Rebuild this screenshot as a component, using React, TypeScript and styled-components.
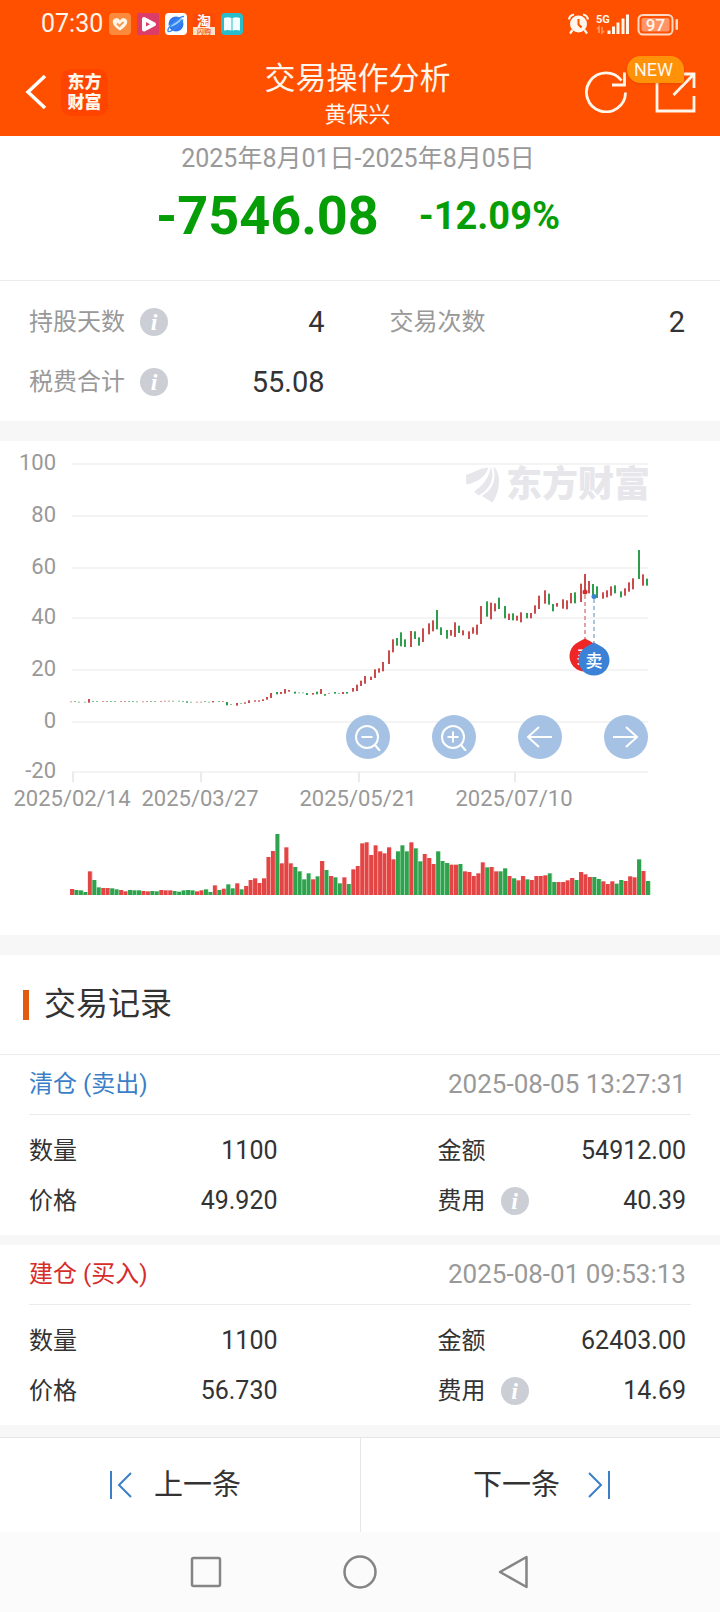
import React from "react";
import styled, { createGlobalStyle } from "styled-components";

const RED = "#c94b4b";
const GREEN = "#2f9e4c";
const BLUE = "#3b82d6";

const GlobalStyle = createGlobalStyle`
  *, *::before, *::after { box-sizing: border-box; }
  body {
    margin: 0;
    background: #fff;
    color: #333;
    font-family: Roboto, "Noto Sans CJK SC", sans-serif;
    line-height: 1.2;
  }
  button {
    font: inherit;
    color: inherit;
    border: 0;
    padding: 0;
    background: none;
    cursor: pointer;
  }
  h1, h2, h3, p, dl, dt, dd { margin: 0; font-weight: 400; }
  svg { display: block; }
`;

/* ---------- status bar and header ---------- */

const Header = styled.header`
  background: #ff5000;
  color: #fff6ec;
`;

const StatusBar = styled.div`
  display: flex;
  align-items: center;
  justify-content: space-between;
  height: 48px;
  padding: 0 41px;
`;

const StatusGroup = styled.div<{ $gap: number }>`
  display: flex;
  align-items: center;
  gap: ${(p) => p.$gap}px;
`;

const Clock = styled.time`
  font-size: 25px;
  line-height: 28px;
`;

const TitleBar = styled.div`
  display: grid;
  grid-template-columns: 1fr auto 1fr;
  align-items: center;
  height: 88px;
  padding: 0 23px 0 24px;
`;

const TitleLeft = styled.div`
  display: flex;
  align-items: center;
  gap: 13px;
`;

const Brand = styled.span`
  display: grid;
  place-content: center;
  width: 47px;
  height: 47px;
  border-radius: 10px;
  background: #ff4400;
  font-size: 17px;
  line-height: 20px;
  font-weight: 900;
`;

const TitleText = styled.div`
  text-align: center;
  padding: 6px 6px 0 0;
`;

const Title = styled.h1`
  font-size: 31px;
  line-height: 40px;
`;

const Holder = styled.p`
  font-size: 22px;
  line-height: 32px;
`;

const Actions = styled.div`
  display: flex;
  justify-content: flex-end;
  gap: 28px;
`;

const ActionButton = styled.button`
  position: relative;
  width: 42px;
  height: 42px;
`;

const NewBadge = styled.span`
  position: absolute;
  left: -28px;
  top: -15px;
  width: 57px;
  height: 27px;
  padding-right: 4px;
  border-radius: 14px 14px 3px 14px;
  background: #ff9208;
  box-shadow: 0 1px 3px rgba(190, 60, 0, 0.4);
  font-size: 18px;
  line-height: 28px;
  text-align: center;
`;

/* ---------- summary ---------- */

const Band = styled.div<{ $height: number }>`
  height: ${(p) => p.$height}px;
  background: #f7f7f7;
`;

const Summary = styled.section`
  display: flex;
  flex-direction: column;
  align-items: center;
  height: 145px;
  padding-right: 4px;
  border-bottom: 1px solid #ebebeb;
`;

const Period = styled.p`
  padding-top: 6px;
  font-size: 25px;
  line-height: 34px;
  color: #999;
`;

const Result = styled.div`
  display: flex;
  align-items: center;
  gap: 40px;
  color: #069e06;
  font-weight: 700;
  line-height: 80px;
`;

const Profit = styled.span`
  font-size: 54px;
`;

const Rate = styled.span`
  font-size: 38px;
`;

const Stats = styled.dl`
  display: grid;
  grid-template-columns: 1fr 1fr;
  column-gap: 65px;
  padding: 11px 35px 9px 29px;
`;

const Stat = styled.div`
  display: flex;
  align-items: center;
  height: 60px;

  dt {
    display: flex;
    align-items: center;
    gap: 15px;
    font-size: 24px;
    color: #999;
  }
  dd {
    flex: 1;
    font-size: 29px;
    text-align: right;
  }
`;

const InfoButton = styled.button`
  width: 28px;
  height: 28px;
  border-radius: 50%;
  background: #cbced5;
  color: #fff;
  font: italic 700 24px/28px "Liberation Serif", serif;
  text-align: center;
`;

/* ---------- chart ---------- */

const ChartPanel = styled.section`
  position: relative;

  & > svg {
    width: 100%;
    height: auto;
  }
`;

const ChartTools = styled.div`
  position: absolute;
  right: 10%;
  top: 55.5%;
  display: flex;
  gap: 42px;
`;

const ToolButton = styled.button`
  display: grid;
  place-items: center;
  width: 44px;
  height: 44px;
  border-radius: 50%;
  background: #a5c2e4;
`;

/* ---------- records ---------- */

const SectionTitle = styled.h2`
  display: flex;
  align-items: center;
  gap: 15px;
  height: 100px;
  padding-left: 23px;
  border-bottom: 1px solid #ebebeb;
  font-size: 32px;

  &::before {
    content: "";
    width: 6px;
    height: 30px;
    background: #e05a10;
  }
`;

const Card = styled.article`
  padding: 0 29px;
`;

const CardHead = styled.div`
  display: flex;
  align-items: center;
  justify-content: space-between;
  height: 60px;
  padding-right: 5px;
  border-bottom: 1px solid #ebebeb;
`;

const Action = styled.h3<{ $color: string }>`
  font-size: 24px;
  color: ${(p) => p.$color};
`;

const Stamp = styled.time`
  font-size: 26px;
  color: #999;
`;

const Fields = styled.dl`
  display: grid;
  grid-template-columns: 1fr 1fr;
  column-gap: 160px;
  padding: 11px 5px 9px 0;
`;

const Field = styled.div`
  display: flex;
  align-items: center;
  height: 50px;

  dt {
    display: flex;
    align-items: center;
    gap: 15px;
    font-size: 24px;
  }
  dd {
    flex: 1;
    font-size: 25px;
    text-align: right;
  }
`;

const Pager = styled.nav`
  display: grid;
  grid-template-columns: 1fr 1fr;
  border-top: 1px solid #e6e6e6;
`;

const PagerButton = styled.button`
  display: flex;
  align-items: center;
  justify-content: center;
  gap: 22px;
  height: 94px;
  padding-right: 9px;
  font-size: 29px;

  & + & {
    padding: 0 0 0 2px;
    gap: 28px;
    border-left: 1px solid #e6e6e6;
  }
`;

const SystemBar = styled.footer`
  display: flex;
  justify-content: center;
  align-items: center;
  gap: 118px;
  height: 80px;
  background: #fbfbfb;

  button { width: 36px; height: 36px; }
`;

/* ---------- data ---------- */

type Tone = "R" | "G";

/* [tone, candle top, candle bottom, volume], one entry per trading day */
const days: [Tone, number, number, number][] = [
  ["R", 784, 787, 18], ["G", 783, 786, 15], ["G", 785, 788, 14], ["G", 785, 788, 9], ["R", 777, 788, 71],
  ["G", 783, 786, 45], ["G", 783, 786, 23], ["R", 783, 786, 21], ["R", 783, 786, 21], ["G", 783, 786, 20],
  ["G", 783, 786, 17], ["R", 783, 786, 15], ["R", 783, 786, 11], ["G", 783, 786, 15], ["G", 783, 786, 14],
  ["G", 784, 787, 14], ["R", 784, 787, 12], ["R", 783, 786, 11], ["G", 783, 786, 12], ["G", 783, 786, 11],
  ["R", 783, 786, 15], ["R", 782, 785, 14], ["R", 782, 785, 14], ["G", 782, 785, 12], ["G", 782, 785, 10],
  ["G", 783, 786, 14], ["G", 784, 788, 15], ["G", 785, 788, 14], ["R", 785, 788, 11], ["R", 785, 788, 14],
  ["G", 783, 786, 17], ["G", 785, 788, 9], ["R", 783, 787, 29], ["G", 783, 786, 15], ["R", 783, 786, 19],
  ["G", 786, 796, 32], ["G", 792, 795, 20], ["R", 789, 797, 35], ["G", 789, 792, 17], ["R", 787, 791, 27],
  ["R", 781, 789, 45], ["R", 781, 785, 50], ["R", 781, 785, 36], ["R", 778, 783, 50], ["R", 771, 779, 114],
  ["R", 759, 774, 132], ["G", 756, 763, 183], ["R", 756, 762, 95], ["R", 747, 761, 143], ["R", 750, 755, 95],
  ["G", 755, 761, 84], ["G", 757, 760, 71], ["G", 757, 760, 47], ["G", 759, 765, 65], ["R", 759, 764, 47],
  ["G", 755, 763, 56], ["R", 747, 762, 102], ["G", 762, 767, 75], ["R", 759, 762, 57], ["G", 756, 761, 53],
  ["G", 759, 762, 35], ["R", 756, 762, 53], ["G", 756, 761, 33], ["R", 744, 755, 77], ["R", 734, 753, 87],
  ["R", 722, 738, 155], ["R", 708, 731, 158], ["R", 710, 720, 120], ["R", 688, 714, 149], ["R", 685, 698, 131],
  ["R", 666, 694, 125], ["R", 631, 672, 143], ["R", 598, 637, 107], ["G", 594, 617, 131], ["G", 577, 619, 149],
  ["G", 598, 621, 131], ["R", 573, 621, 158], ["G", 574, 597, 140], ["G", 592, 617, 101], ["R", 565, 606, 123],
  ["R", 550, 583, 111], ["R", 541, 574, 93], ["G", 510, 568, 131], ["G", 562, 585, 102], ["G", 570, 596, 96],
  ["R", 570, 587, 91], ["R", 547, 591, 91], ["G", 557, 579, 93], ["R", 571, 586, 71], ["R", 574, 597, 69],
  ["R", 562, 581, 57], ["R", 554, 584, 65], ["R", 498, 552, 98], ["G", 484, 530, 83], ["R", 488, 538, 84],
  ["R", 490, 514, 71], ["G", 473, 507, 71], ["G", 498, 535, 80], ["R", 521, 540, 57], ["G", 520, 541, 50],
  ["R", 527, 542, 44], ["R", 517, 547, 57], ["G", 519, 535, 47], ["R", 519, 535, 45], ["R", 496, 521, 57],
  ["R", 467, 507, 57], ["R", 451, 491, 59], ["G", 461, 494, 65], ["G", 492, 514, 39], ["R", 489, 500, 39],
  ["R", 478, 506, 39], ["R", 481, 508, 44], ["R", 459, 490, 51], ["G", 457, 490, 45], ["R", 431, 486, 69],
  ["R", 402, 458, 62], ["R", 423, 460, 54], ["G", 432, 468, 54], ["G", 439, 474, 48], ["R", 457, 476, 41],
  ["R", 451, 472, 33], ["R", 439, 467, 41], ["G", 436, 460, 34], ["G", 454, 472, 45], ["R", 445, 467, 42],
  ["R", 427, 455, 56], ["R", 415, 448, 53], ["G", 330, 417, 107], ["R", 403, 437, 72], ["G", 416, 437, 42],
];

const yAxis = [
  { label: "100", y: 23 },
  { label: "80", y: 75 },
  { label: "60", y: 127 },
  { label: "40", y: 177 },
  { label: "20", y: 229 },
  { label: "0", y: 281 },
  { label: "-20", y: 331 },
];

const xAxis = [
  { label: "2025/02/14", x: 73 },
  { label: "2025/03/27", x: 201 },
  { label: "2025/05/21", x: 359 },
  { label: "2025/07/10", x: 515 },
];

const PITCH = 4.465;

const records = [
  {
    action: "清仓 (卖出)", color: "#3a7fc8", time: "2025-08-05 13:27:31",
    fields: [["数量", "1100"], ["金额", "54912.00"], ["价格", "49.920"], ["费用", "40.39"]],
  },
  {
    action: "建仓 (买入)", color: "#d62c2c", time: "2025-08-01 09:53:13",
    fields: [["数量", "1100"], ["金额", "62403.00"], ["价格", "56.730"], ["费用", "14.69"]],
  },
];

/* ---------- parts ---------- */

const Info = ({ topic }: { topic: string }) => (
  <InfoButton type="button" aria-label={`${topic}说明`}>i</InfoButton>
);

const AppIcons = () => (
  <>
    <svg width="22" height="22" viewBox="0 0 22 22">
      <rect width="22" height="22" rx="4" fill="#fb8a3c" />
      <path d="M11 17.500C7 15 3.800 12 3.800 8.800a3.700 3.700 0 0 1 7.200-1.200 3.700 3.700 0 0 1 7.200 1.200C18.200 12 15 15 11 17.500z" fill="#fff6e8" />
      <path d="m8 10.500 2.500 2.500 4-4" fill="none" stroke="#f49a55" strokeWidth="1.800" />
    </svg>
    <svg width="22" height="22" viewBox="0 0 22 22">
      <rect width="22" height="22" rx="2" fill="#dc3c68" />
      <path d="M7 6v10.500l10-5.200z" fill="#fff" stroke="#fff" strokeWidth="4" strokeLinejoin="round" />
      <path d="M9 9v4.500l4-2.300z" fill="#dc3c68" />
    </svg>
    <svg width="22" height="22" viewBox="0 0 22 22">
      <rect width="22" height="22" rx="4" fill="#fff" />
      <circle cx="11" cy="11" r="7.500" fill="#2f78ee" />
      <path d="M4 13C8 13 14 9 16.500 5.500" fill="none" stroke="#8fd0ff" strokeWidth="2" />
      <path d="M3 18.500C1.500 15 14 3 19 3.500M3 18.500c3 1 13-7 15-12" fill="none" stroke="#3c86ee" strokeWidth="1.300" />
    </svg>
    <svg width="22" height="22" viewBox="0 0 22 22">
      <rect width="22" height="22" rx="2" fill="#fb4a08" />
      <rect y="14" width="22" height="8" fill="#fbe3c8" />
      <text x="11" y="13" textAnchor="middle" fontSize="14" fontWeight="700" fill="#fff">淘</text>
      <text x="11" y="21" textAnchor="middle" fontSize="7" fontWeight="700" fill="#f0641e">闪购</text>
    </svg>
    <svg width="22" height="22" viewBox="0 0 22 22">
      <rect width="22" height="22" rx="4" fill="#29bccb" />
      <path d="M3 5q4-1.500 7.500 0v12.500Q7 16.500 3 17.500zM19 5q-4-1.500-7.500 0v12.500q3.500-1 7.500 0z" fill="#f2fdff" />
    </svg>
  </>
);

const DeviceState = () => (
  <svg width="111" height="24" viewBox="0 0 111 24">
    <circle cx="10.500" cy="12" r="8.500" fill="#fff6ec" />
    <path d="M1 7.500A6 6 0 0 1 6 2.500M20 7.500a6 6 0 0 0-5-5M4.500 18 2 21.500M16.500 18l2.500 3.500" stroke="#fff6ec" strokeWidth="2.200" fill="none" />
    <path d="M10.500 7v5.500l3 3" stroke="#ff5000" strokeWidth="2" fill="none" />
    <text x="28" y="10.500" fontSize="11" fontWeight="700" fill="#fff6ec">5G</text>
    <path d="M31 21v-6l-2 2M34 15v6l2-2" stroke="#ff9a6b" strokeWidth="1.500" fill="none" />
    <path d="M41 18.500V22M45.500 14.500V22M50 10.500V22M55 6.500V22M59.500 2.500V22" stroke="#fff6ec" strokeWidth="3" />
    <rect x="70.500" y="3" width="34" height="19.500" rx="4.500" fill="none" stroke="#ffd9c4" strokeWidth="2" />
    <rect x="73.500" y="6" width="28" height="13.500" rx="2" fill="#ff9468" />
    <rect x="107.500" y="7" width="2.500" height="11" rx="1" fill="#ffd9c4" />
    <text x="87.500" y="18.500" textAnchor="middle" fontSize="17" fontWeight="500" fill="#fff6ec">97</text>
  </svg>
);

const PriceChart = () => (
  <svg viewBox="0 0 720 494" role="img" aria-label="价格与成交量走势">
    {yAxis.map((t) => (
      <g key={t.label}>
        <line x1="72" x2="648" y1={t.y} y2={t.y} stroke="#f4f4f4" strokeWidth="2" />
        <text x="56" y={t.y + 6} textAnchor="end" fontSize="22" fill="#999">{t.label}</text>
      </g>
    ))}
    {xAxis.map((t) => (
      <g key={t.label}>
        <line x1={t.x} x2={t.x} y1="331" y2="341" stroke="#ebebeb" strokeWidth="2" />
        <text x={t.x - 1} y="365" textAnchor="middle" fontSize="22" fill="#999">{t.label}</text>
      </g>
    ))}
    <g fill="#e6e6eb">
      <path d="M466 34C473 32 480 27 488.500 26.500 486 35 478 41 467 43.500L466 42z" />
      <path d="M491 26C488 38 484 44 474 50.500L478.500 54.500C490 48 495 38 491 26z" />
      <path d="M493.500 25.500C500 31 502 47 492.500 61.500L482 55C492 49 497 40 493.500 25.500z" />
      <text x="506" y="56" fontSize="36" fontWeight="900">东方财富</text>
    </g>
    {days.map(([tone, top, bottom, volume], i) => (
      <g key={i}>
        <rect
          x={2 * Math.floor((i * PITCH + 71) / 2)}
          y={top / 3 - 1}
          width="2"
          height={(bottom - top) / 3}
          fill={tone === "R" ? RED : GREEN}
          opacity={bottom - top < 4 ? 0.6 : 1}
        />
        <rect
          x={70 + i * PITCH}
          y={454 - volume / 3}
          width="4"
          height={volume / 3}
          fill={tone === "R" ? "#e34444" : "#2fa24d"}
        />
        <rect x={74 + i * PITCH} y={454 - volume / 3} width="0.500" height={volume / 3} fill={tone === "R" ? "#ff9a9a" : "#8edda2"} />
      </g>
    ))}
    <g strokeWidth="1.500" strokeDasharray="4 3">
      <line x1="585" x2="585" y1="154" y2="198" stroke="#d98686" />
      <line x1="594" x2="594" y1="158" y2="202" stroke="#8fb3cf" />
    </g>
    <circle cx="585" cy="151" r="2.500" fill="#d62c2c" />
    <circle cx="594" cy="155.500" r="2.500" fill={BLUE} />
    <g textAnchor="middle" fontSize="17" fontWeight="500">
      <path d="M585 197.500q4 2 9 5a15.500 15.500 0 1 1-18 0q5-3 9-5z" fill="#ee2626" />
      <text x="585" y="222" fill="#fff">买</text>
      <path d="M594 201.500q4 2 9 5a15.500 15.500 0 1 1-18 0q5-3 9-5z" fill={BLUE} />
      <text x="594" y="226" fill="#fff">卖</text>
    </g>
  </svg>
);

const tools = [
  { name: "缩小", d: "M22 12a11 11 0 1 1-22 0 11 11 0 0 1 22 0zM19 20l5 6M5.500 12h11" },
  { name: "放大", d: "M22 12a11 11 0 1 1-22 0 11 11 0 0 1 22 0zM19 20l5 6M5.500 12h11M11 6.500v11" },
  { name: "向左", d: "M24 12H0M11 2 0 12l11 10" },
  { name: "向右", d: "M-1 12h24M12 2l11 10-11 10" },
];

export default function App() {
  return (
    <>
      <GlobalStyle />
      <Header>
        <StatusBar>
          <StatusGroup $gap={6}>
            <Clock>07:30</Clock>
            <AppIcons />
          </StatusGroup>
          <DeviceState />
        </StatusBar>
        <TitleBar>
          <TitleLeft>
            <button type="button" aria-label="返回">
              <svg width="24" height="36" viewBox="0 0 24 36" fill="none" stroke="#fff" strokeWidth="3.500">
                <path d="M21 2 4 18l17 16" />
              </svg>
            </button>
            <Brand>
              <span>东方</span>
              <span>财富</span>
            </Brand>
          </TitleLeft>
          <TitleText>
            <Title>交易操作分析</Title>
            <Holder>黄保兴</Holder>
          </TitleText>
          <Actions>
            <ActionButton type="button" aria-label="刷新">
              <svg width="42" height="42" viewBox="0 0 42 42" fill="none" stroke="#fff6ec" strokeWidth="2.800">
                <path d="M40.500 21.500A19.500 19.500 0 1 1 36.500 9.500" />
                <path d="M39.500 1.500v12.500H27" />
              </svg>
            </ActionButton>
            <ActionButton type="button" aria-label="分享">
              <svg width="42" height="42" viewBox="0 0 42 42" fill="none" stroke="#fff6ec" strokeWidth="2.800">
                <path d="M14 3H2v37h37V25" />
                <path d="M28 3h11v14M39 3 18.500 24" />
              </svg>
              <NewBadge>NEW</NewBadge>
            </ActionButton>
          </Actions>
        </TitleBar>
      </Header>

      <main>
        <Summary>
          <Period>2025年8月01日-2025年8月05日</Period>
          <Result>
            <Profit>-7546.08</Profit>
            <Rate>-12.09%</Rate>
          </Result>
        </Summary>
        <Stats>
          <Stat>
            <dt>持股天数 <Info topic="持股天数" /></dt>
            <dd>4</dd>
          </Stat>
          <Stat>
            <dt>交易次数</dt>
            <dd>2</dd>
          </Stat>
          <Stat>
            <dt>税费合计 <Info topic="税费合计" /></dt>
            <dd>55.08</dd>
          </Stat>
        </Stats>
        <Band $height={20} />

        <ChartPanel>
          <PriceChart />
          <ChartTools>
            {tools.map((t) => (
              <ToolButton key={t.name} type="button" aria-label={t.name}>
                <svg width="28" height="28" viewBox="-2 -2 28 28" fill="none" stroke="#fff" strokeWidth="2">
                  <path d={t.d} />
                </svg>
              </ToolButton>
            ))}
          </ChartTools>
        </ChartPanel>
        <Band $height={20} />

        <SectionTitle>交易记录</SectionTitle>
        {records.map((r, i) => (
          <React.Fragment key={r.time}>
            <Card>
              <CardHead>
                <Action $color={r.color}>{r.action}</Action>
                <Stamp>{r.time}</Stamp>
              </CardHead>
              <Fields>
                {r.fields.map(([name, value]) => (
                  <Field key={name}>
                    <dt>
                      {name}
                      {name === "费用" && <Info topic={name} />}
                    </dt>
                    <dd>{value}</dd>
                  </Field>
                ))}
              </Fields>
            </Card>
            <Band $height={i === 0 ? 10 : 12} />
          </React.Fragment>
        ))}

        <Pager>
          <PagerButton type="button">
            <svg width="22" height="28" viewBox="0 0 22 28" fill="none" stroke="#3a7fc8" strokeWidth="2">
              <path d="M1 0v28M21 2 9 14l12 12" />
            </svg>
            上一条
          </PagerButton>
          <PagerButton type="button">
            下一条
            <svg width="22" height="28" viewBox="0 0 22 28" fill="none" stroke="#3a7fc8" strokeWidth="2">
              <path d="M21 0v28M1 2l12 12L1 26" />
            </svg>
          </PagerButton>
        </Pager>
      </main>

      <SystemBar>
        <button type="button" aria-label="最近任务">
          <svg width="36" height="36" viewBox="0 0 36 36" fill="none" stroke="#858585" strokeWidth="2.500">
            <rect x="4" y="4" width="28" height="28" rx="1.500" />
          </svg>
        </button>
        <button type="button" aria-label="主屏幕">
          <svg width="36" height="36" viewBox="0 0 36 36" fill="none" stroke="#858585" strokeWidth="2.500">
            <circle cx="18" cy="18" r="15.500" />
          </svg>
        </button>
        <button type="button" aria-label="返回上一页">
          <svg width="36" height="36" viewBox="0 0 36 36" fill="none" stroke="#858585" strokeWidth="2.500" strokeLinejoin="round">
            <path d="M30.500 3v30L4 18z" />
          </svg>
        </button>
      </SystemBar>
    </>
  );
}
